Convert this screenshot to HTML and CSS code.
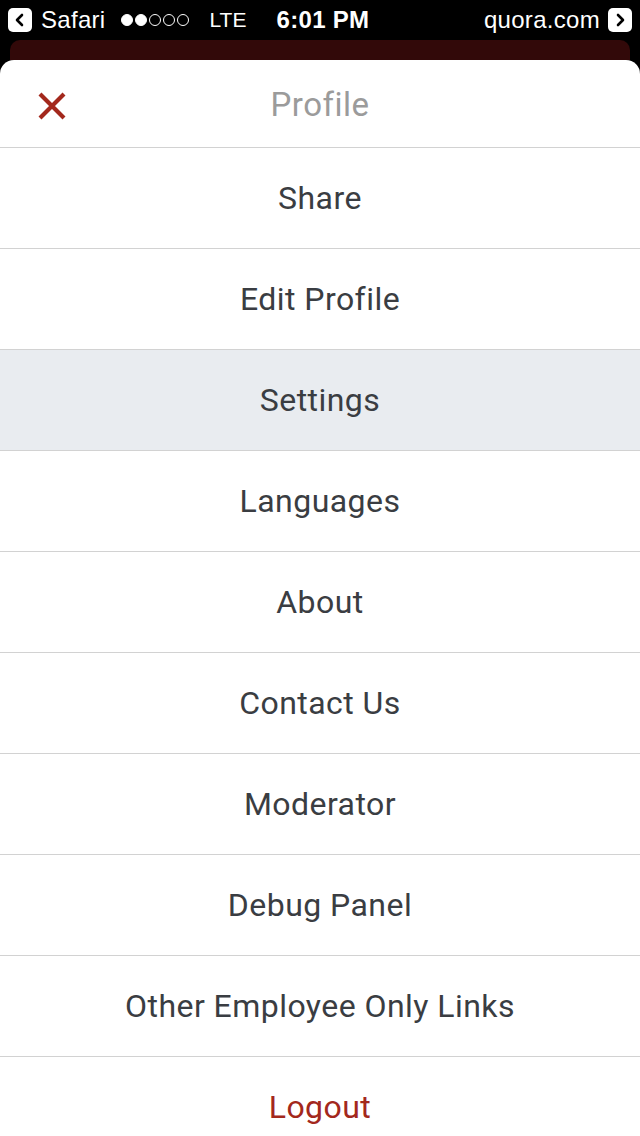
FILE: index.html
```html
<!DOCTYPE html>
<html>
<head>
<meta charset="utf-8">
<link rel="stylesheet" href="styles.css">
</head>
<body>
<div class="statusbar">
  <div class="sb-left">
    <span class="navbox"><svg width="16" height="16" viewBox="0 0 16 16"><path d="M10 3 L5 8 L10 13" fill="none" stroke="#000" stroke-width="2.6" stroke-linecap="round" stroke-linejoin="round"/></svg></span>
    <span class="sb-text">Safari</span>
    <span class="dots"><i class="on"></i><i class="on"></i><i></i><i></i><i></i></span>
    <span class="sb-text lte">LTE</span>
  </div>
  <div class="sb-time">6:01 PM</div>
  <div class="sb-right">
    <span class="sb-text">quora.com</span>
    <span class="navbox"><svg width="16" height="16" viewBox="0 0 16 16"><path d="M6 3 L11 8 L6 13" fill="none" stroke="#000" stroke-width="2.6" stroke-linecap="round" stroke-linejoin="round"/></svg></span>
  </div>
</div>
<div class="backdrop">
  <div class="peek"></div>
  <div class="sheet">
    <div class="sheet-header">
      <span class="close"><svg width="30" height="30" viewBox="0 0 30 30"><path d="M3 3 L27 27 M27 3 L3 27" stroke="#a3281c" stroke-width="4.2" stroke-linecap="butt"/></svg></span>
      <span class="title">Profile</span>
    </div>
    <ul class="menu">
      <li class="item">Share</li>
      <li class="item">Edit Profile</li>
      <li class="item active">Settings</li>
      <li class="item">Languages</li>
      <li class="item">About</li>
      <li class="item">Contact Us</li>
      <li class="item">Moderator</li>
      <li class="item">Debug Panel</li>
      <li class="item">Other Employee Only Links</li>
      <li class="item logout">Logout</li>
    </ul>
  </div>
</div>
</body>
</html>
```
FILE: styles.css
```css
html, body {
  margin: 0;
  padding: 0;
  background: #000;
  height: 1136px;
  overflow: hidden;
}
.statusbar {
  height: 40px;
  display: flex;
  align-items: center;
  justify-content: space-between;
  padding: 0 8px;
  color: #fff;
  font-family: "Liberation Sans", Arial, sans-serif;
  font-size: 24px;
  letter-spacing: 0.3px;
  position: relative;
}
.sb-left, .sb-right {
  display: flex;
  align-items: center;
}
.navbox {
  width: 24px;
  height: 24px;
  background: #fff;
  border-radius: 5px;
  display: flex;
  align-items: center;
  justify-content: center;
}
.sb-left .navbox { margin-right: 9px; }
.sb-right .navbox { margin-left: 8px; }
.dots {
  display: flex;
  gap: 2px;
  margin-left: 15px;
  margin-right: 21px;
}
.dots i {
  width: 12px;
  height: 12px;
  border-radius: 50%;
  border: 1.3px solid #fff;
  box-sizing: border-box;
}
.dots i.on { background: #fff; }
.lte {
  font-size: 21px;
  letter-spacing: 0;
}
.sb-time {
  position: absolute;
  left: 0;
  right: 0;
  text-align: center;
  font-weight: bold;
  pointer-events: none;
  padding-left: 6px;
}
.backdrop {
  background: #000;
}
.peek {
  height: 20px;
  margin: 0 10px;
  background: #320909;
  border-radius: 10px 10px 0 0;
}
.sheet {
  background: #fff;
  border-radius: 14px 14px 0 0;
  margin-top: -20px;
  position: relative;
  top: 20px;
  font-family: Roboto, "Noto Sans", sans-serif;
}
.sheet-header {
  height: 87px;
  border-bottom: 1px solid #d2d2d2;
  display: flex;
  align-items: center;
  justify-content: center;
  position: relative;
}
.close {
  position: absolute;
  left: 37px;
  top: 31px;
  width: 30px;
  height: 30px;
}
.title {
  font-size: 33px;
  letter-spacing: 0.5px;
  color: #9b9b9b;
  padding-top: 2px;
}
.menu {
  list-style: none;
  margin: 0;
  padding: 0;
}
.item {
  height: 100px;
  border-bottom: 1px solid #d2d2d2;
  display: flex;
  align-items: center;
  justify-content: center;
  font-size: 32px;
  letter-spacing: 0.45px;
  color: #3a3d42;
}
.item.active {
  background: #e9ecf0;
}
.item.logout {
  color: #a3281c;
  border-bottom: none;
}
```
